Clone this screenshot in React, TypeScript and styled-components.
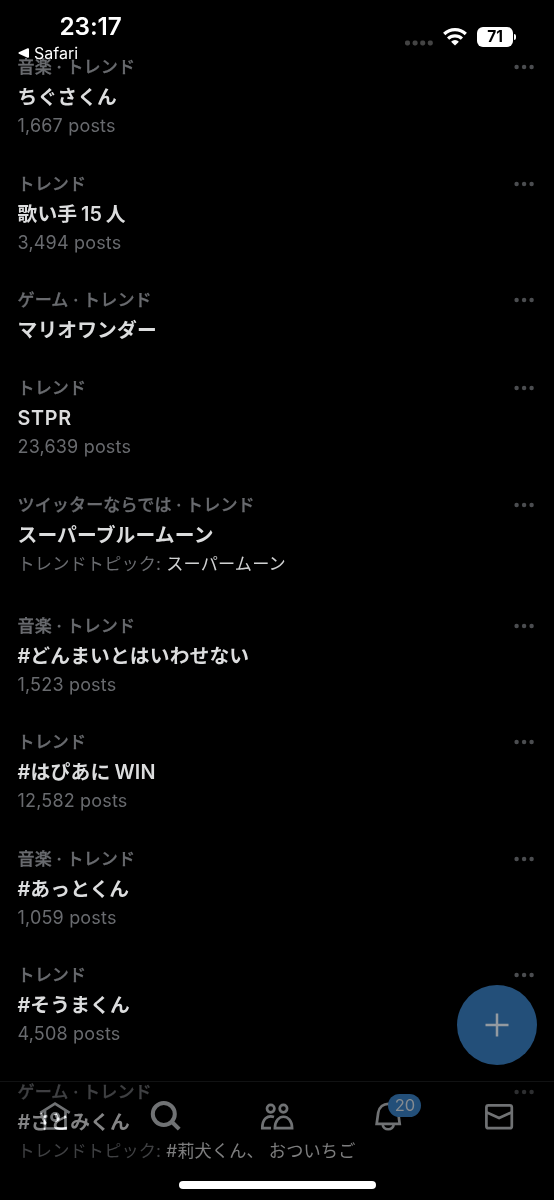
import React from 'react';
import styled, { createGlobalStyle } from 'styled-components';

const Global = createGlobalStyle`
  * { box-sizing: border-box; }
  html, body { margin: 0; background: #000; }
`;

const Screen = styled.main`
  position: relative;
  width: 554px;
  height: 1200px;
  overflow: hidden;
  background: #000;
  font-family: Inter, 'Noto Sans CJK JP', sans-serif;
  color: #dcddde;
`;

const StatusBar = styled.header`
  position: absolute;
  inset: 0 0 auto 0;
  z-index: 3;
  display: flex;
  justify-content: space-between;
  padding: 12px 38px 0 18px;
  color: #fff;
`;

const ClockBlock = styled.div`
  display: flex;
  flex-direction: column;
`;

const Clock = styled.div`
  padding-left: 41.5px;
  font-size: 24.3px;
  line-height: 28px;
  font-weight: 600;
  letter-spacing: -0.1px;
`;

const BackLink = styled.div`
  display: flex;
  align-items: center;
  gap: 5px;
  height: 26px;
  font-size: 16px;
  letter-spacing: 0;
`;

const Indicators = styled.div`
  display: flex;
  align-items: flex-start;
  padding-top: 15px;
`;

const Signal = styled.svg`
  margin: 13px 10px 0 0;
`;

const Battery = styled.div`
  display: flex;
  align-items: center;
  gap: 1px;
  margin-left: 10px;
`;

const BatteryBody = styled.div`
  width: 36px;
  height: 20px;
  border-radius: 6px;
  background: #fff;
  color: #000;
  font-size: 15.5px;
  line-height: 20px;
  font-weight: 700;
  text-align: center;
`;

const BatteryCap = styled.div`
  width: 2px;
  height: 6px;
  border-radius: 0 2px 2px 0;
  background: #fff;
`;

const List = styled.ul`
  margin: 0;
  padding: 55px 20px 0 17.5px;
  list-style: none;
`;

const Item = styled.li`
  display: flex;
  justify-content: space-between;
  padding-bottom: 28.2px;
`;

const Context = styled.div`
  height: 24px;
  line-height: 24px;
  font-size: 17.1px;
  font-weight: 500;
  color: #696b6f;
  -webkit-text-stroke: 0.3px #696b6f;
  white-space: pre;
  letter-spacing: 0.08px;
`;

const Title = styled.div<{ $spacing?: number }>`
  height: 36px;
  line-height: 36px;
  font-size: 19.8px;
  font-weight: 600;
  white-space: pre;
  word-spacing: -1.4px;
  letter-spacing: ${(p) => p.$spacing ?? 0.12}px;
`;

const Meta = styled.div<{ $topic?: boolean }>`
  height: 22px;
  line-height: 22px;
  margin-bottom: ${(p) => (p.$topic ? 10.4 : 6.4)}px;
  font-size: ${(p) => (p.$topic ? 17.2 : 18)}px;
  letter-spacing: ${(p) => (p.$topic ? 0.14 : 0.18)}px;
  color: #696b6f;
  white-space: pre;
`;

const Topic = styled.span`
  color: #d0d1d2;
`;

const More = styled.svg`
  flex: none;
  margin-top: 9px;
`;

const Compose = styled.button`
  position: absolute;
  left: 457px;
  top: 985px;
  z-index: 2;
  display: grid;
  place-items: center;
  width: 80px;
  height: 80px;
  padding: 0;
  border: 0;
  border-radius: 50%;
  background: #234f79;
`;

const TabBar = styled.nav`
  position: absolute;
  inset: 1081px 0 0 0;
  border-top: 1px solid #111213;
  background: rgba(0, 0, 0, 0.4);
`;

const Tabs = styled.div`
  position: absolute;
  inset: 1081px 0 0 0;
  display: grid;
  grid-template-columns: repeat(5, 110.8px);
  align-items: start;
  padding-top: 16px;
  mix-blend-mode: plus-lighter;
`;

const Tab = styled.div`
  position: relative;
  display: flex;
  justify-content: center;
`;

const Badge = styled.span`
  position: absolute;
  left: 56px;
  top: -3px;
  width: 33px;
  height: 23px;
  border-radius: 12px;
  background: #234f79;
  color: #858b91;
  font-size: 16.5px;
  line-height: 23px;
  text-align: center;
`;

const HomeIndicator = styled.div`
  position: absolute;
  left: 179px;
  top: 1181px;
  z-index: 4;
  width: 197px;
  height: 8px;
  border-radius: 4px;
  background: #fff;
`;

type Trend = {
  context: string;
  title: string;
  count?: string;
  topics?: string;
  spacing?: number;
};

const trends: Trend[] = [
  { context: '音楽 · トレンド', title: 'ちぐさくん', count: '1,667 posts' },
  { context: 'トレンド', title: '歌い手 15 人', count: '3,494 posts' },
  { context: 'ゲーム · トレンド', title: 'マリオワンダー' },
  { context: 'トレンド', title: 'STPR', count: '23,639 posts', spacing: 0.7 },
  { context: 'ツイッターならでは · トレンド', title: 'スーパーブルームーン', topics: 'スーパームーン' },
  { context: '音楽 · トレンド', title: '#どんまいとはいわせない', count: '1,523 posts' },
  { context: 'トレンド', title: '#はぴあに WIN', count: '12,582 posts', spacing: 0.25 },
  { context: '音楽 · トレンド', title: '#あっとくん', count: '1,059 posts' },
  { context: 'トレンド', title: '#そうまくん', count: '4,508 posts' },
  { context: 'ゲーム · トレンド', title: '#さとみくん', topics: '#莉犬くん、 おついちご' },
];

function TrendRow({ trend }: { trend: Trend }) {
  return (
    <Item>
      <div>
        <Context>{trend.context}</Context>
        <Title $spacing={trend.spacing}>{trend.title}</Title>
        {trend.count && <Meta>{trend.count}</Meta>}
        {trend.topics && (
          <Meta $topic>
            トレンドトピック: <Topic>{trend.topics}</Topic>
          </Meta>
        )}
      </div>
      <More width="20" height="6" fill="#4b4d50">
        <circle cx="2.6" cy="3" r="2.2" />
        <circle cx="10.1" cy="3" r="2.2" />
        <circle cx="17.6" cy="3" r="2.2" />
      </More>
    </Item>
  );
}

const stroke = { fill: 'none', stroke: '#707274', strokeWidth: 2.7 };

export default function App() {
  return (
    <Screen>
      <Global />
      <List>
        {trends.map((t) => (
          <TrendRow key={t.title} trend={t} />
        ))}
      </List>
      <StatusBar>
        <ClockBlock>
          <Clock>23:17</Clock>
          <BackLink>
            <svg width="11" height="10" viewBox="0 0 11 10" fill="#fff">
              <path d="M.8 4.3 9.6.2Q11 0 11 1v8q0 1-1.4.8L.8 5.7Q0 5 .8 4.3Z" />
            </svg>
            Safari
          </BackLink>
        </ClockBlock>
        <Indicators>
          <Signal width="28" height="6" fill="#434343">
            <rect x="0" y="0.6" width="5" height="4.8" rx="1.8" />
            <rect x="7.6" y="0.6" width="5" height="4.8" rx="1.8" />
            <rect x="15.2" y="0.6" width="5" height="4.8" rx="1.8" />
            <rect x="22.8" y="0.6" width="5" height="4.8" rx="1.8" />
          </Signal>
          <svg width="24" height="20" viewBox="0 0 24 20" fill="none" stroke="#fff" strokeWidth="3.2">
            <path d="M1.2 7a15.600 15.600 0 0 1 21.600 0" />
            <path d="M5.100 11.600a9.900 9.900 0 0 1 13.800 0" />
            <path d="m12 18.600-3.900-3.900a5.600 5.600 0 0 1 7.800 0Z" fill="#fff" stroke="none" />
          </svg>
          <Battery>
            <BatteryBody>71</BatteryBody>
            <BatteryCap />
          </Battery>
        </Indicators>
      </StatusBar>
      <TabBar />
      <Tabs>
        <Tab>
          <svg width="34" height="36" viewBox="0 0 34 36" {...stroke}>
            <path d="m2.300 15.800 14.700-9.300 14.700 9.300M7 13v18.500h20.500V13" />
            <circle cx="17.200" cy="20" r="3.700" />
          </svg>
        </Tab>
        <Tab>
          <svg width="34" height="36" viewBox="0 0 34 36" {...stroke} strokeWidth="4">
            <circle cx="14.800" cy="17" r="11" />
            <path d="m22.500 24.500 7.700 7.700" />
          </svg>
        </Tab>
        <Tab>
          <svg width="34" height="36" viewBox="0 0 34 36" {...stroke}>
            <circle cx="10.700" cy="11.600" r="3.700" />
            <circle cx="23.400" cy="11.600" r="3.700" />
            <path d="M14 20C7.500 17.800 2.300 22 2.300 31.200h8.700M14.900 31.200c0-15.300 17.200-15.300 17.200 0Z" />
          </svg>
        </Tab>
        <Tab>
          <svg width="34" height="36" viewBox="0 0 34 36" {...stroke}>
            <path d="M5.700 26.800 7.200 15.800c1.700-12 18.300-12 20 0L28.700 26.800Z" />
            <path d="M11.700 27c0 7 11 7 11 0" />
          </svg>
          <Badge>20</Badge>
        </Tab>
        <Tab>
          <svg width="34" height="36" viewBox="0 0 34 36" {...stroke}>
            <rect x="4.400" y="8.400" width="25.400" height="22.800" rx="2" />
            <path d="m4.400 15.300 12.700 5.600 12.700-5.600" />
          </svg>
        </Tab>
      </Tabs>
      <Compose aria-label="+">
        <svg width="24" height="24" stroke="#939aa1" strokeWidth="2.5">
          <path d="M12 .5v23M.5 12h23" />
        </svg>
      </Compose>
      <HomeIndicator />
    </Screen>
  );
}
